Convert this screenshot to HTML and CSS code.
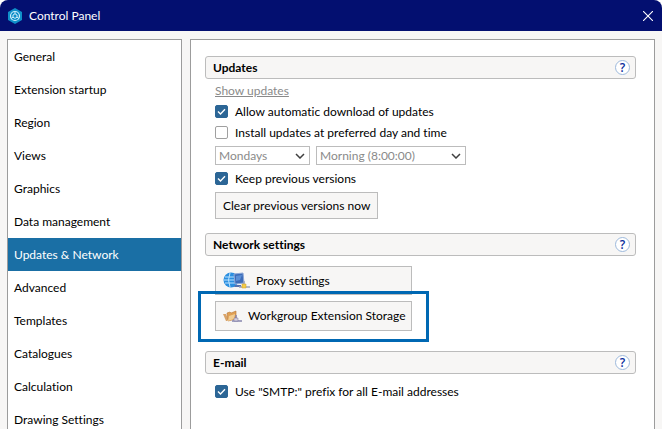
FILE: index.html
```html
<!DOCTYPE html>
<html lang="en">
<head>
    <meta charset="UTF-8">
    <meta name="viewport" content="width=device-width, initial-scale=1.0">
    <title>Control Panel</title>
    <link rel="stylesheet" href="styles.css">
</head>
<body>
    <div class="window">
        <header class="titlebar">
            <svg class="app-icon" viewBox="0 0 16 16" width="16" height="16">
                <path d="M8 0 L15 4 V12 L8 16 L1 12 V4 Z" fill="#0f8fc9"/>
                <circle cx="8" cy="8" r="4.5" fill="none" stroke="#c9ecfa" stroke-width="1.2"/>
                <path d="M8 3.5 V6 M4 10.5 L6 9.2 M12 10.5 L10 9.2 M8 5.8 L10 7 V9.2 L8 10.4 L6 9.2 V7 Z" fill="none" stroke="#c9ecfa"/>
            </svg>
            <span class="window-title">Control Panel</span>
            <button type="button" class="close" aria-label="Close">
                <svg viewBox="0 0 10 10" width="10" height="10">
                    <path d="M0 0 L10 10 M10 0 L0 10" stroke="#fff" stroke-width="1.1"/>
                </svg>
            </button>
        </header>

        <div class="content">
            <nav class="sidebar">
                <a href="#">General</a>
                <a href="#">Extension startup</a>
                <a href="#">Region</a>
                <a href="#">Views</a>
                <a href="#">Graphics</a>
                <a href="#">Data management</a>
                <a href="#" class="selected">Updates &amp; Network</a>
                <a href="#">Advanced</a>
                <a href="#">Templates</a>
                <a href="#">Catalogues</a>
                <a href="#">Calculation</a>
                <a href="#">Drawing Settings</a>
            </nav>

            <main class="panel">
                <section>
                    <div class="section-header">
                        <h2>Updates</h2>
                        <button type="button" class="help">?</button>
                    </div>
                    <div class="section-body">
                        <a href="#" class="show-updates">Show updates</a>
                        <div class="check">
                            <input type="checkbox" id="autoDownload" checked>
                            <label for="autoDownload">Allow automatic download of updates</label>
                        </div>
                        <div class="check">
                            <input type="checkbox" id="preferredTime">
                            <label for="preferredTime">Install updates at preferred day and time</label>
                        </div>
                        <div class="schedule">
                            <select class="day" aria-label="Day" disabled>
                                <option>Mondays</option>
                            </select>
                            <select class="time" aria-label="Time" disabled>
                                <option>Morning (8:00:00)</option>
                            </select>
                        </div>
                        <div class="check">
                            <input type="checkbox" id="keepVersions" checked>
                            <label for="keepVersions">Keep previous versions</label>
                        </div>
                        <button type="button" class="btn clear">Clear previous versions now</button>
                    </div>
                </section>

                <section>
                    <div class="section-header">
                        <h2>Network settings</h2>
                        <button type="button" class="help">?</button>
                    </div>
                    <div class="section-body network">
                        <button type="button" class="btn proxy">
                            <svg viewBox="0 0 27 17" width="27" height="17">
                                <circle cx="8" cy="8" r="7.5" fill="#2c8fe0"/>
                                <path d="M2 5 H12 M1 8 H12 M2 11 H12" fill="none" stroke="#b9e2ff"/>
                                <path d="M7 1 Q4 8 7 15" fill="none" stroke="#b9e2ff"/>
                                <path d="M11 2 L20 1 L21 11 L12 12 Z" fill="#3d6cb8" stroke="#8fa9d8"/>
                                <path d="M13 4 L19 3 L17 8 L13 9 Z" fill="#5b8fd6"/>
                                <path d="M12 13 H18 V15 H11 Z" fill="#5572b0"/>
                                <path d="M21 9 V12 M16 15 H27" stroke="#9aa2b8" stroke-width="1.5"/>
                                <path d="M19 12 H23 V16 H19 Z" fill="#f4cb4a" stroke="#c99c2b" stroke-width="0.5"/>
                            </svg>
                            Proxy settings
                        </button>
                        <div class="highlighted">
                            <button type="button" class="btn storage">
                                <svg viewBox="0 0 19 12" width="19" height="12">
                                    <path d="M0 4 H3 L5 9 L4 11 H3 Z" fill="#d9a46a"/>
                                    <path d="M4 3 L7 2 L8 3 L13 1 V9 L5 11 Z" fill="#e0a055" stroke="#b87734" stroke-width="0.6"/>
                                    <path d="M6 6 L12 4 L11 9 L5 11 Z" fill="#f2cd92"/>
                                    <path d="M13 5 V9 M9 11 H19" stroke="#8785ad" stroke-width="1.5"/>
                                    <path d="M11 8 H15 V11 H11 Z" fill="#d5d0de" stroke="#7774a0" stroke-width="0.5"/>
                                </svg>
                                Workgroup Extension Storage
                            </button>
                        </div>
                    </div>
                </section>

                <section>
                    <div class="section-header">
                        <h2>E-mail</h2>
                        <button type="button" class="help">?</button>
                    </div>
                    <div class="section-body email">
                        <div class="check">
                            <input type="checkbox" id="smtpPrefix" checked>
                            <label for="smtpPrefix">Use "SMTP:" prefix for all E-mail addresses</label>
                        </div>
                    </div>
                </section>
            </main>
        </div>
    </div>
</body>
</html>
```
FILE: styles.css
```css
* {
    box-sizing: border-box;
}
body {
    margin: 0;
    background-color: #fff;
    font-family: Lato, "Open Sans", sans-serif;
    font-size: 12px;
    font-variant-ligatures: none;
    line-height: 16px;
    color: #000;
}
button, select, input {
    font: inherit;
    color: inherit;
    margin: 0;
}
.window {
    display: flex;
    flex-direction: column;
    height: 100vh;
    overflow: hidden;
    background-color: #f7f6f5;
    border-radius: 8px 8px 0 0;
}

/* Title bar */
.titlebar {
    display: flex;
    flex: none;
    align-items: center;
    height: 31px;
    padding: 0 8px 0 7px;
    background-color: #030f70;
    color: #fff;
}
.window-title {
    margin-left: 6px;
}
.app-icon {
    display: block;
}
.close {
    display: flex;
    margin-left: auto;
    padding: 1px;
    border: 0;
    background: none;
}

.content {
    display: flex;
    flex: 1;
    gap: 8px;
    min-height: 0;
    padding: 8px 7px 0;
}
.sidebar, .panel {
    background-color: #fff;
    border: 1px solid #9c9c9c;
    border-bottom: 0;
}
.sidebar {
    flex: none;
    width: 175px;
    overflow: hidden;
}
.sidebar a {
    display: block;
    padding: 0 6px;
    line-height: 33px;
    color: #000;
    text-decoration: none;
}
.sidebar a.selected {
    background-color: #1a6fa5;
    color: #fff;
}

/* Settings */
.panel {
    flex: 1;
    padding: 16px 18px 0 14px;
}
.section-header {
    display: flex;
    align-items: center;
    justify-content: space-between;
    height: 23px;
    padding: 0 5px 0 7px;
    background-color: #f7f6f5;
    border: 1px solid #bcbcbc;
    border-radius: 3px;
}
.section-header h2 {
    margin: 0;
    font-size: 12px;
    font-weight: bold;
}
.help {
    width: 15px;
    height: 15px;
    padding: 0;
    border: 1px solid #9db9dc;
    border-radius: 50%;
    background-color: #fff;
    color: #0a2f9c;
    font-family: "Open Sans", sans-serif;
    font-weight: 600;
    line-height: 13px;
    text-align: center;
}
.section-body {
    display: flex;
    flex-direction: column;
    align-items: flex-start;
    padding: 4px 10px 14px;
}
.show-updates {
    margin-bottom: 2px;
    color: #8a8a8a;
}
.check {
    display: flex;
    align-items: center;
    gap: 7px;
    height: 21px;
}
.check input {
    appearance: none;
    width: 13px;
    height: 13px;
    border: 1px solid #a0a0a0;
    border-radius: 2px;
    background-color: #fff;
}
.check input:checked {
    border-color: #2c6696;
    background: #2c6696 url("data:image/svg+xml,%3Csvg xmlns='http://www.w3.org/2000/svg' viewBox='0 0 11 11'%3E%3Cpath d='M2 5.5 L4.5 8 L9 3.3' fill='none' stroke='white' stroke-width='1.4'/%3E%3C/svg%3E") center / 11px 11px no-repeat;
}
.schedule {
    display: flex;
    gap: 6px;
    margin: 3px 0;
}
select {
    appearance: none;
    height: 19px;
    padding: 0 3px;
    border: 1px solid #bcbcbc;
    border-radius: 0;
    line-height: 17px;
    background: #fff url("data:image/svg+xml,%3Csvg xmlns='http://www.w3.org/2000/svg' viewBox='0 0 10 6'%3E%3Cpath d='M1 1 L5 5 L9 1' fill='none' stroke='%23404040' stroke-width='1.5'/%3E%3C/svg%3E") right 4px center / 10px 6px no-repeat;
}
select:disabled {
    color: #8a8a8a;
    opacity: 1;
}
.day {
    width: 95px;
}
.time {
    width: 150px;
}
.btn {
    display: flex;
    align-items: center;
    padding: 0 7px;
    border: 1px solid #bcbcbc;
    background-color: #f7f6f5;
    white-space: nowrap;
}
.btn svg {
    flex: none;
}
.clear {
    height: 27px;
    margin-top: 3px;
}
.network {
    gap: 6px;
    padding-top: 10px;
    padding-bottom: 20px;
}
.proxy, .storage {
    width: 197px;
    height: 29px;
    gap: 6px;
}
.storage {
    height: 30px;
}
.highlighted {
    position: relative;
}
/* Callout frame drawn round the storage button */
.highlighted::after {
    content: "";
    position: absolute;
    inset: -10px -17px -11px;
    border: 3px solid #0068b3;
    pointer-events: none;
}
.email {
    padding-top: 7px;
}
```
